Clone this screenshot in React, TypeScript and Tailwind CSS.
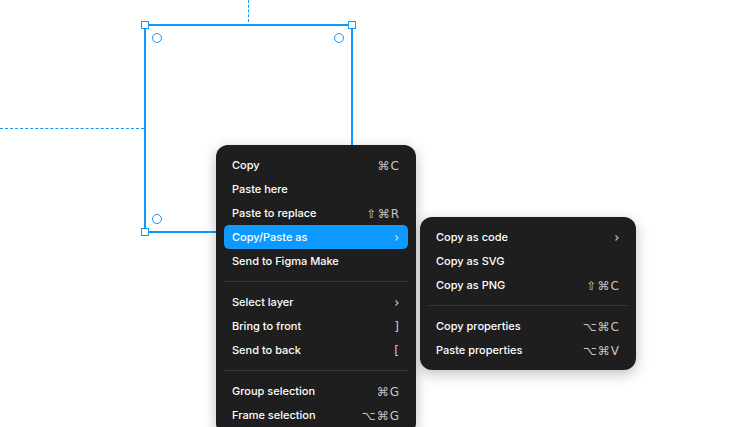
type Item = { label: string; shortcut?: string; sub?: boolean; active?: boolean } | 'sep';

const mainItems: Item[] = [
  { label: 'Copy', shortcut: '⌘C' },
  { label: 'Paste here' },
  { label: 'Paste to replace', shortcut: '⇧⌘R' },
  { label: 'Copy/Paste as', sub: true, active: true },
  { label: 'Send to Figma Make' },
  'sep',
  { label: 'Select layer', sub: true },
  { label: 'Bring to front', shortcut: ']' },
  { label: 'Send to back', shortcut: '[' },
  'sep',
  { label: 'Group selection', shortcut: '⌘G' },
  { label: 'Frame selection', shortcut: '⌥⌘G' },
];

const subItems: Item[] = [
  { label: 'Copy as code', sub: true },
  { label: 'Copy as SVG' },
  { label: 'Copy as PNG', shortcut: '⇧⌘C' },
  'sep',
  { label: 'Copy properties', shortcut: '⌥⌘C' },
  { label: 'Paste properties', shortcut: '⌥⌘V' },
];

function Chevron() {
  return (
    <svg width="6" height="8" viewBox="0 0 6 8" className="text-white/70">
      <path d="M1.5 1.5 L4 4 L1.5 6.5" fill="none" stroke="currentColor" strokeWidth="1.2" />
    </svg>
  );
}

function Menu({ items }: { items: Item[] }) {
  return (
    <div className="flex flex-col">
      {items.map((it, i) =>
        it === 'sep' ? (
          <div key={i} className="my-2 h-px bg-[#383838]" />
        ) : (
          <div
            key={i}
            className={`flex h-6 items-center justify-between rounded-[5px] px-2 pt-px ${
              it.active ? 'bg-[#0d99ff]' : ''
            }`}
          >
            <span>{it.label}</span>
            {it.shortcut && (
              <span className="font-['DejaVu_Sans',sans-serif] text-[12px] tracking-[1px] text-white/75">
                {it.shortcut}
              </span>
            )}
            {it.sub && <Chevron />}
          </div>
        ),
      )}
    </div>
  );
}

function Handle({ className }: { className: string }) {
  return <div className={`absolute h-2 w-2 border border-[#0d99ff] bg-white ${className}`} />;
}

function Dot({ className }: { className: string }) {
  return <div className={`absolute h-[10px] w-[10px] rounded-full border border-[#0d99ff] bg-white ${className}`} />;
}

export default function App() {
  return (
    <div className="relative h-[427px] w-[739px] overflow-hidden bg-white font-['Inter',sans-serif] text-[11px] font-medium text-white">
      {/* measurement guides */}
      <div className="absolute left-[248px] top-0 h-[22px] border-l border-dashed border-[#0d99ff]" />
      <div className="absolute left-0 top-[128px] w-[144px] border-t border-dashed border-[#0d99ff]" />

      {/* selected frame */}
      <div className="absolute left-[144px] top-[24px] h-[209px] w-[209px] border-2 border-[#0d99ff]" />
      <Handle className="left-[141px] top-[21px]" />
      <Handle className="left-[348px] top-[21px]" />
      <Handle className="left-[141px] top-[228px]" />
      <Dot className="left-[152px] top-[33px]" />
      <Dot className="left-[334px] top-[33px]" />
      <Dot className="left-[152px] top-[214px]" />

      {/* context menu */}
      <div className="absolute left-[216px] top-[145px] w-[200px] rounded-[12px] bg-[#1e1e1e] p-2 shadow-[0_4px_14px_rgba(0,0,0,0.25)]">
        <Menu items={mainItems} />
      </div>

      {/* submenu */}
      <div className="absolute left-[420px] top-[217px] w-[216px] rounded-[12px] bg-[#1e1e1e] p-2 shadow-[0_4px_14px_rgba(0,0,0,0.25)]">
        <Menu items={subItems} />
      </div>
    </div>
  );
}
